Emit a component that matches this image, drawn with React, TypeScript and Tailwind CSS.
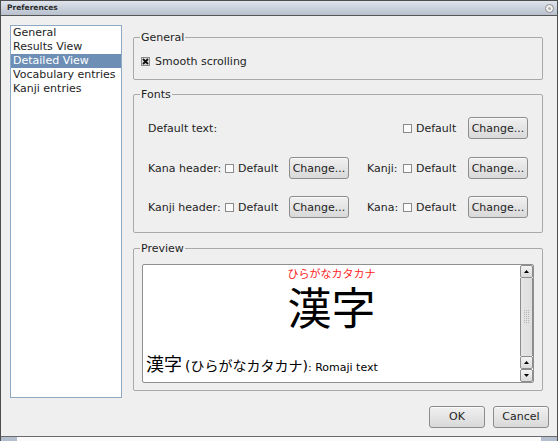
import React from "react";

const F = "font-['DejaVu_Sans','Noto_Sans_CJK_JP',sans-serif]";

function Check({ checked = false }: { checked?: boolean }) {
  return (
    <span className="inline-flex w-[9px] h-[9px] border border-[#8a8a8a] bg-[#fbfbfb] items-center justify-center shrink-0">
      {checked && (
        <svg width="7" height="7" viewBox="0 0 7 7">
          <rect x="0" y="0" width="7" height="7" fill="#3a3a3a" opacity="0.15" />
          <path d="M1 1 L6 6 M6 1 L1 6" stroke="#111" strokeWidth="1.8" />
        </svg>
      )}
    </span>
  );
}

function Btn({ label, w = "w-[60px]" }: { label: string; w?: string }) {
  return (
    <div
      className={`${w} h-[22px] flex items-center justify-center border border-[#8c8c8c] rounded-[3px] bg-gradient-to-b from-[#f0f0f0] to-[#d9d9d9] text-[11px] text-[#1e1e1e] shadow-[inset_0_1px_0_#fafafa]`}
    >
      {label}
    </div>
  );
}

function CheckDefault() {
  return (
    <div className="flex items-center gap-[4px] text-[11px] leading-[13px] text-[#1e1e1e]">
      <Check />
      <span>Default</span>
    </div>
  );
}

function Arrow({ up }: { up: boolean }) {
  return (
    <div className="w-[13px] h-[13px] border border-[#8c8c8c] rounded-[2px] bg-gradient-to-b from-[#f4f4f4] to-[#dadada] flex items-center justify-center">
      <svg width="5" height="3" viewBox="0 0 5 3">
        {up ? <path d="M0 3 L2.5 0 L5 3 Z" fill="#000" /> : <path d="M0 0 L2.5 3 L5 0 Z" fill="#000" />}
      </svg>
    </div>
  );
}

function Group({ title, children, className = "" }: { title: string; children: React.ReactNode; className?: string }) {
  return (
    <fieldset className={`border border-[#a9a9a9] rounded-[2px] ${className}`}>
      <legend className="ml-[6px] px-[1px] text-[11px] leading-[13px] text-[#1e1e1e]">{title}</legend>
      {children}
    </fieldset>
  );
}

export default function App() {
  const items = ["General", "Results View", "Detailed View", "Vocabulary entries", "Kanji entries"];
  return (
    <div className={`w-[558px] h-[441px] flex flex-col bg-[#efefef] border-x border-t border-[#4d4d4d] ${F} overflow-hidden`}>
      {/* title bar */}
      <div className="h-[15px] shrink-0 border-b border-[#555] bg-gradient-to-b from-[#dfe4ec] to-[#b7c0cd] flex items-center justify-between pl-[6px] pr-[3px]">
        <span className="text-[7.5px] font-bold text-[#2b2b2b] leading-[10px]">Preferences</span>
        <span className="w-[9px] h-[9px] rounded-full border border-[#8d8d8d] bg-[#f2f2f2] flex items-center justify-center">
          <span className="w-[3px] h-[3px] rounded-full bg-[#b0b0b0]" />
        </span>
      </div>

      {/* body */}
      <div className="h-[420px] shrink-0 flex flex-col pl-[9px] pr-[8px] pt-[9px]">
        <div className="flex items-start gap-[11px]">
          {/* list */}
          <div className="w-[112px] h-[373px] border border-[#8ea9c6] bg-white text-[11px] leading-[14px] text-[#1e1e1e]">
            {items.map((it) => (
              <div
                key={it}
                className={`h-[14px] pl-[2px] whitespace-nowrap ${it === "Detailed View" ? "bg-[#6d8fb6] text-white" : ""}`}
              >
                {it}
              </div>
            ))}
          </div>

          {/* right column */}
          <div className="w-[410px] mt-[6px] flex flex-col">
            <Group title="General">
              <div className="pl-[7px] pt-[11px] pb-[11px] flex items-center gap-[5px] text-[11px] leading-[13px] text-[#1e1e1e]">
                <Check checked />
                <span>Smooth scrolling</span>
              </div>
            </Group>

            <Group title="Fonts" className="mt-[8px]">
              <div className="pl-[14px] pt-[16px] pb-[14px] flex flex-col text-[11px] leading-[13px] text-[#1e1e1e]">
                <div className="grid grid-cols-[77px_64px_60px_18px_36px_65px_60px] items-center h-[22px]">
                  <span className="col-span-5">Default text:</span>
                  <CheckDefault />
                  <Btn label="Change..." />
                </div>
                <div className="grid grid-cols-[77px_64px_60px_18px_36px_65px_60px] items-center h-[22px] mt-[18px]">
                  <span>Kana header:</span>
                  <CheckDefault />
                  <Btn label="Change..." />
                  <span />
                  <span>Kanji:</span>
                  <CheckDefault />
                  <Btn label="Change..." />
                </div>
                <div className="grid grid-cols-[77px_64px_60px_18px_36px_65px_60px] items-center h-[22px] mt-[17px]">
                  <span>Kanji header:</span>
                  <CheckDefault />
                  <Btn label="Change..." />
                  <span />
                  <span>Kana:</span>
                  <CheckDefault />
                  <Btn label="Change..." />
                </div>
              </div>
            </Group>

            <Group title="Preview" className="mt-[9px]">
              <div className="pl-[8px] pr-[8px] pt-[9px] pb-[7px]">
                <div className="h-[119px] border border-[#8f8f8f] rounded-[2px] bg-white flex">
                  <div className="flex-1 flex flex-col items-center pt-[3px]">
                    <div className="text-[11px] leading-[13px] text-[#ff2424]">ひらがなカタカナ</div>
                    <div className="text-[44px] leading-[40px] mt-[5px] text-black font-['Noto_Sans_CJK_JP',sans-serif]">漢字</div>
                    <div className="self-start mt-auto pl-[3px] pb-[5px] flex items-baseline text-black whitespace-nowrap">
                      <span className="text-[18px] leading-[20px] font-['Noto_Sans_CJK_JP',sans-serif]">漢字</span>
                      <span className="text-[14px] ml-[3px]">(ひらがなカタカナ)</span>
                      <span className="text-[11px]">: Romaji text</span>
                    </div>
                  </div>
                  <div className="w-[13px] flex flex-col">
                    <Arrow up />
                    <div className="flex-1 border-x border-[#8c8c8c] bg-gradient-to-r from-[#e6e6e6] to-[#dedede] flex items-center justify-center">
                      <svg width="7" height="14" viewBox="0 0 7 14">
                        {[0, 1, 2, 3, 4, 5, 6].map((r) =>
                          [0, 1, 2].map((c) => (
                            <rect key={`${r}-${c}`} x={c * 2 + 1} y={r * 2} width="1" height="1" fill="#b5b5b5" />
                          ))
                        )}
                      </svg>
                    </div>
                    <Arrow up />
                    <Arrow up={false} />
                  </div>
                </div>
              </div>
            </Group>
          </div>
        </div>

        <div className="mt-[8px] flex justify-end gap-[8px] text-[11px]">
          <Btn label="OK" w="w-[56px]" />
          <Btn label="Cancel" w="w-[56px]" />
        </div>
      </div>

      {/* bottom frame */}
      <div className="flex-1 border-t border-[#6a6a6a] bg-[#fafafa] flex justify-between">
        <span className="w-[16px] h-full bg-[#b3bfcf]" />
        <span className="w-[16px] h-full bg-[#b3bfcf]" />
      </div>
    </div>
  );
}
